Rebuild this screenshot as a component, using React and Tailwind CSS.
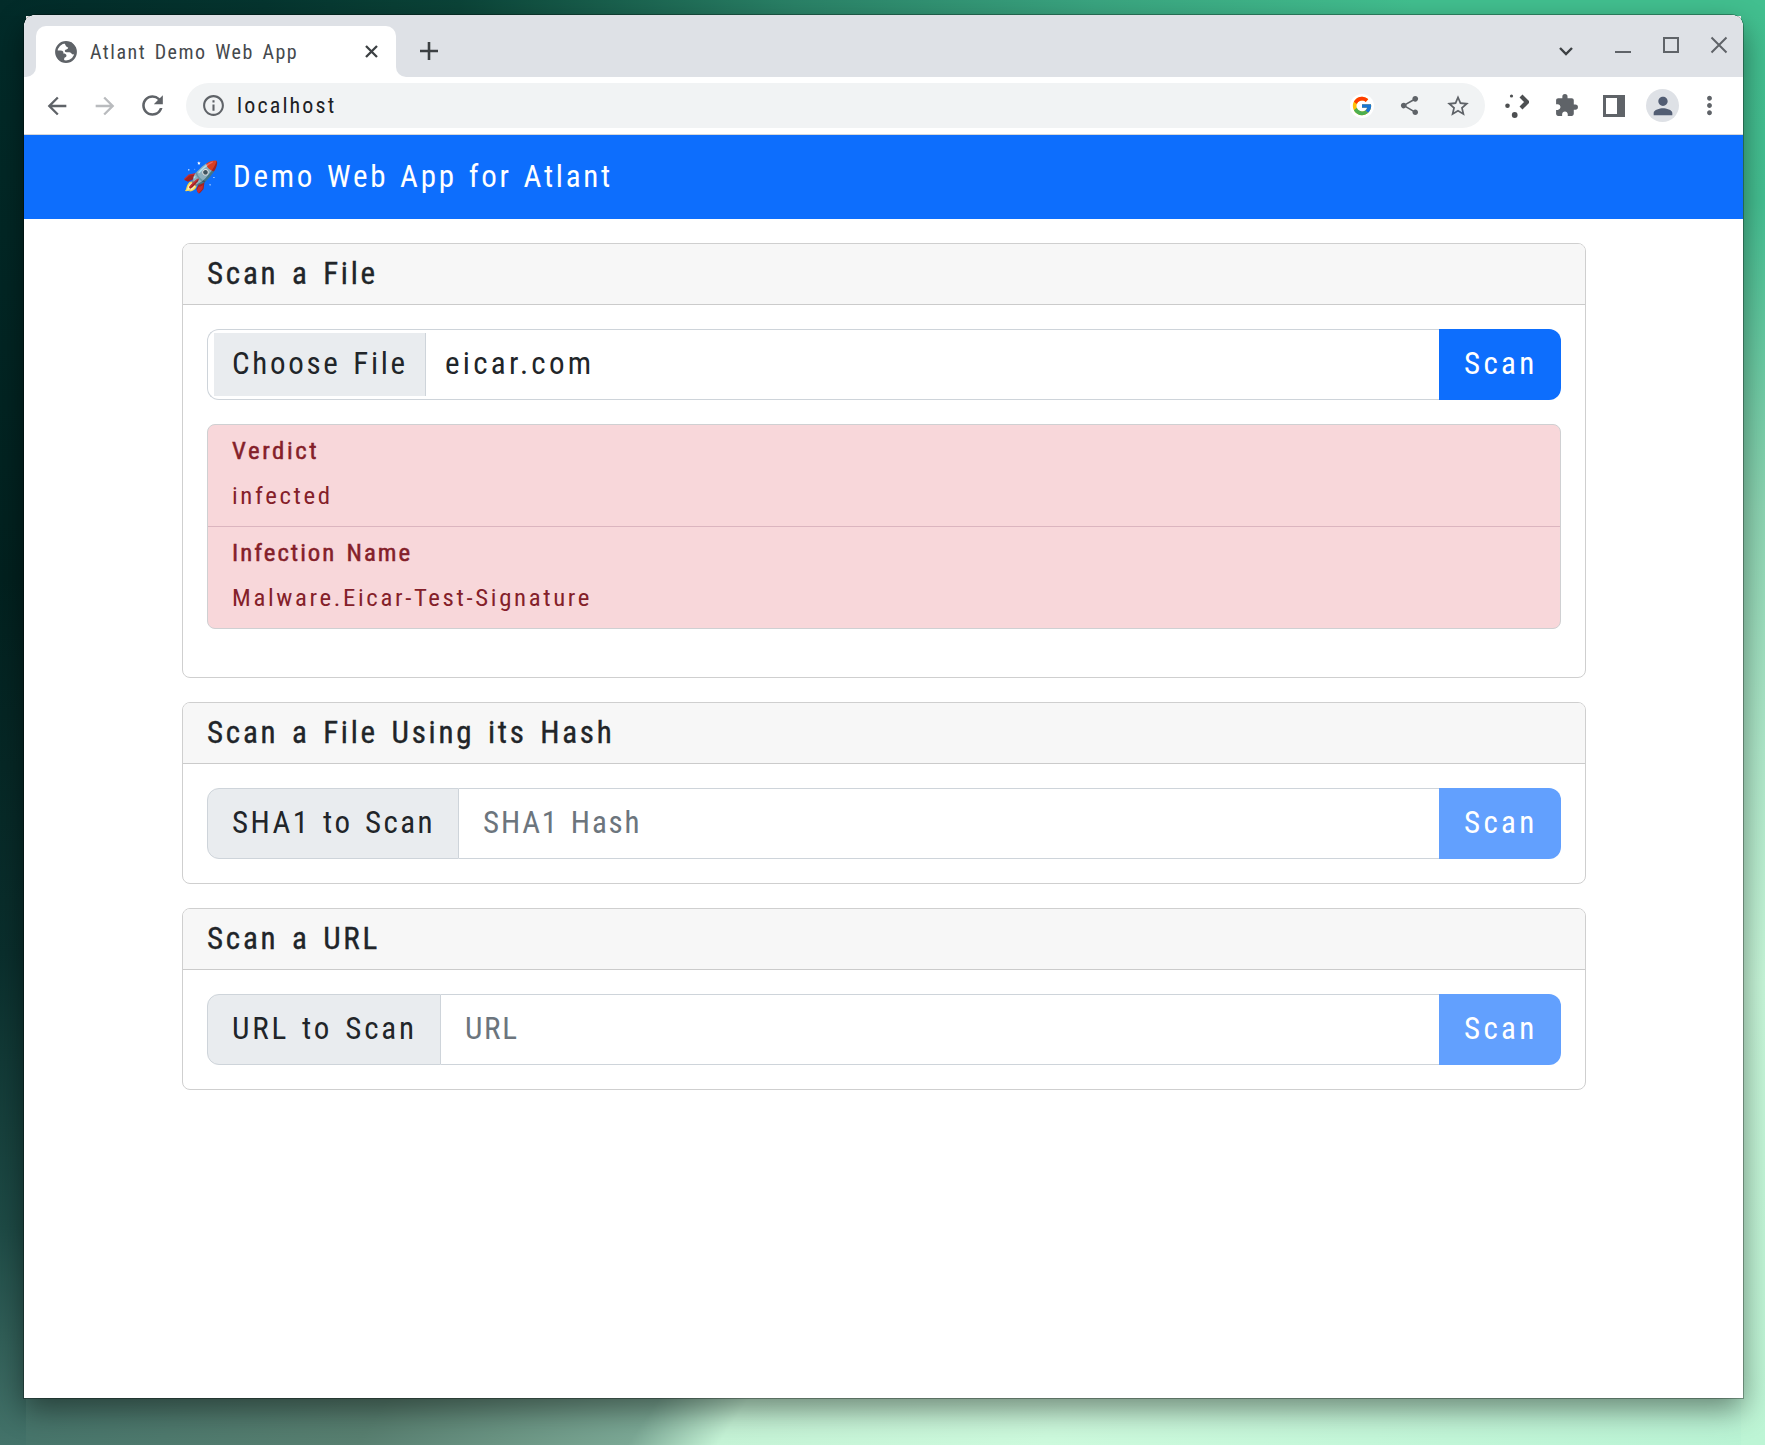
import React from "react";
import { MdArrowBack, MdArrowForward, MdRefresh, MdInfoOutline, MdShare, MdStarBorder, MdExtension, MdPerson, MdMoreVert } from "react-icons/md";
import { FcGoogle } from "react-icons/fc";

function Globe() {
  return (
    <svg viewBox="0 0 22 22" className="size-[22px] shrink-0" fill="#5f6368">
      <circle cx="11" cy="11" r="9.7" fill="none" stroke="#5f6368" strokeWidth="2.4" />
      <path d="M9.5 1H16L21 7v5l-2.6 1.4C16.5 13.400 16.6 11.500 14.500 11.200H11.500C9.600 11.200 9.300 9.600 10.500 8.800C11.700 8.200 13.200 8.300 13.200 6.500C11.700 6.600 10 4.500 9.500 1Z" />
      <path d="M1 9.500H5.500C8.200 9.500 8.800 11 8.300 12.600C9.800 12.600 11.600 13.200 11.500 14.800C11.300 16.400 9.600 16 9.200 17.500L9 21L3.500 18.500L1 13Z" />
    </svg>
  );
}

function TabBar() {
  return (
    <div className="flex h-[62px] shrink-0 bg-[#dee1e6]">
      <div className="w-3 shrink-0 bg-white">
        <div className="h-full rounded-br-[10px] bg-[#dee1e6]" />
      </div>
      <div className="flex shrink-0 flex-col justify-end bg-[#dee1e6]">
        <div className="flex h-[51px] w-[360px] items-center rounded-t-[10px] bg-white pl-[19px] pr-[18px]">
          <Globe />
          <span className="ml-[13px] flex-1 text-xl tracking-[1.500px] text-[#45494d] [word-spacing:2.5px]">Atlant Demo Web App</span>
          <svg className="size-[13px]" viewBox="0 0 13 13" stroke="#3c4043" strokeWidth="2.300"><path d="M1 1l11 11M12 1L1 12" /></svg>
        </div>
      </div>
      <div className="flex-1 bg-white">
        <div className="flex h-full rounded-bl-[10px] bg-[#dee1e6]">
          <svg className="ml-6 mt-[27px] size-[18px]" viewBox="0 0 18 18" stroke="#3c4043" strokeWidth="2.600"><path d="M9 0v18M0 9h18" /></svg>
          <div className="ml-auto flex pr-[15px]">
            <svg className="mt-[31px] h-[11px] w-4" viewBox="0 0 16 11" fill="none" stroke="#3c4043" strokeWidth="2.4"><path d="M2 2l6 6 6-6" /></svg>
            <svg className="ml-[40px] mt-[22px] h-4 w-[18px]" viewBox="0 0 18 16" stroke="#5f6368" strokeWidth="2"><path d="M1 15h16" /></svg>
            <svg className="ml-[30px] mt-[21px] size-[18px]" viewBox="0 0 18 18" fill="none" stroke="#5f6368" strokeWidth="2"><path d="M2 2h14v14H2z" /></svg>
            <svg className="ml-[30px] mt-[21px] size-[18px]" viewBox="0 0 18 18" stroke="#5f6368" strokeWidth="2"><path d="M1.500 1.500l15 15M16.500 1.500l-15 15" /></svg>
          </div>
        </div>
      </div>
    </div>
  );
}

function Toolbar() {
  return (
    <div className="flex h-[58px] shrink-0 items-center border-b border-[#d5d7da] bg-white pr-[19px] pl-[19px] text-[#5f6368]">
      <MdArrowBack className="size-[28px]" />
      <MdArrowForward className="ml-5 size-[28px] text-[#b9bbbe]" />
      <MdRefresh className="ml-[18px] size-[31px]" />
      <div className="ml-[18px] flex h-[45px] flex-1 items-center rounded-full bg-[#f1f3f4] pl-[15px] pr-[14px]">
        <MdInfoOutline className="size-[25px]" />
        <span className="ml-[11px] flex-1 text-[22px] tracking-[2.150px] text-[#202124]">localhost</span>
        <span className="flex size-6 items-center justify-center rounded-full bg-white"><FcGoogle className="size-[22px]" /></span>
        <MdShare className="ml-6 size-[23px]" />
        <MdStarBorder className="ml-6 size-[26px]" />
      </div>
      <svg className="ml-5 size-6 shrink-0" viewBox="0 0 24 24" fill="#4d4f51">
        <circle cx="6.500" cy="2" r="1.600" /><circle cx="2.500" cy="11.700" r="2.300" /><circle cx="9.700" cy="21" r="2.900" />
        <path d="M16 2l6 6-6 6" fill="none" stroke="#4d4f51" strokeWidth="4.200" />
      </svg>
      <MdExtension className="ml-[25px] size-[25px]" />
      <svg className="ml-6 size-[22px] shrink-0" viewBox="0 0 22 22"><path d="M0 0h22v22H0z" fill="#5f6368" /><path d="M3 3h11v16H3z" fill="#fff" /></svg>
      <span className="ml-[21px] flex size-[33px] items-center justify-center rounded-full bg-[#dee1e6] text-[#525d73]"><MdPerson className="size-[28px]" /></span>
      <MdMoreVert className="ml-[16px] size-[29px]" />
    </div>
  );
}

function Card({ title, className, children }) {
  return (
    <section className={`flex shrink-0 flex-col rounded-lg border border-[#cfcfcf] bg-white ${className}`}>
      <h2 className="flex h-[61px] shrink-0 items-center rounded-t-[7px] border-b border-[#cbcbcb] bg-[#f7f7f7] px-6 tracking-[2.750px] [-webkit-text-stroke:0.350px_#212529] [word-spacing:3.800px]">{title}</h2>
      <div className="p-6">{children}</div>
    </section>
  );
}

function ScanButton({ disabled }) {
  return (
    <button disabled={disabled} className="flex w-[122px] items-center rounded-r-[12px] bg-[#0d6efd] pl-[25px] tracking-[3.300px] text-white disabled:bg-[#62a0fe]">Scan</button>
  );
}

function TextScan({ label, placeholder, labelClass, inputClass }) {
  return (
    <div className="flex h-[71px]">
      <span className={`flex items-center whitespace-nowrap rounded-l-[12px] border border-[#ced4da] bg-[#e9ecef] pl-6 ${labelClass}`}>{label}</span>
      <input placeholder={placeholder} className={`min-w-0 flex-1 border-y border-[#ced4da] bg-white px-6 [word-spacing:3px] placeholder:text-[#6c757d] ${inputClass}`} />
      <ScanButton disabled />
    </div>
  );
}

function ResultRow({ name, value, className, nameClass }) {
  return (
    <div className={`px-6 pt-2 text-[24.800px]/9 tracking-[2.650px] [word-spacing:2.500px] ${className}`}>
      <dt className={`[-webkit-text-stroke:0.500px_#842029] ${nameClass}`}>{name}</dt>
      <dd className="mt-[9px]">{value}</dd>
    </div>
  );
}

export default function App() {
  return (
    <div className="h-[1445px] w-[1765px] bg-[linear-gradient(to_right,#022b29_0%,#05352f_15%,#0b4438_26%,#2a8267_45%,#3aa580_62%,#42bf8f_80%,#42bf8f_100%),linear-gradient(to_bottom,#42bf8f_0%,#45c092_14%,#8dd6b3_35%,#b0eacb_52%,#c8f8da_68%,#bdf5d5_100%),linear-gradient(to_bottom,#022b29_0%,#02211f_40%,#0a2f2d_66%,#1e4b46_85%,#44736a_100%),linear-gradient(124deg,#44736a_0%,#587f70_22%,#7ba895_37%,#c5f3d6_42%,#cdfadd_60%,#b9f3d4_100%)] bg-[size:100%_16px,24px_100%,26px_100%,100%_60px] bg-[position:top,right_top,left_top,bottom] bg-no-repeat px-6 pt-[15px] pr-[22px] pb-[47px] font-['Roboto_Condensed',Roboto,sans-serif]">
      <div className="flex h-full flex-col overflow-hidden rounded-t-[12px] bg-white shadow-[0_0_0_1px_rgba(0,0,0,0.300),0_12px_30px_rgba(0,0,0,0.450)]">
        <TabBar />
        <Toolbar />
        <header className="flex h-[84px] shrink-0 items-center bg-[#0d6efd] pl-[158px] text-[31px] tracking-[2.750px] text-white [word-spacing:2px]">
          <span className="mr-[14px] w-[37px] pb-0.5 font-['Noto_Color_Emoji'] text-[30px] tracking-normal">🚀</span>
          Demo Web App for Atlant
        </header>
        <main className="flex flex-col gap-6 pt-6 pl-[158px] pr-[157px] text-[31px] tracking-[2.700px] text-[#212529] [word-spacing:3px]">
          <Card title="Scan a File" className="h-[435px]">
            <div className="flex h-[71px]">
              <div className="flex flex-1 items-center rounded-l-[12px] border border-r-0 border-[#ced4da] pl-1.5">
                <span className="flex h-[63px] w-[212px] items-center whitespace-nowrap border-r border-[#ced4da] bg-[#e9ecef] pl-[18px]">Choose File</span>
                <span className="ml-[19px] tracking-[3.300px]">eicar.com</span>
              </div>
              <ScanButton />
            </div>
            <dl className="mt-6 h-[205px] rounded-lg border border-[#cfd0d2] bg-[#f8d7da] text-[#842029]">
              <ResultRow name="Verdict" value="infected" className="h-[102px] border-b border-[#dbb5bf]" nameClass="tracking-[2.600px]" />
              <ResultRow name="Infection Name" value="Malware.Eicar-Test-Signature" className="" nameClass="tracking-[2px]" />
            </dl>
          </Card>
          <Card title="Scan a File Using its Hash" className="h-[182px]">
            <TextScan label="SHA1 to Scan" placeholder="SHA1 Hash" labelClass="w-[252px] tracking-[2.450px]" inputClass="tracking-[1.800px]" />
          </Card>
          <Card title="Scan a URL" className="h-[182px]">
            <TextScan label="URL to Scan" placeholder="URL" labelClass="w-[234px] tracking-[2.850px]" inputClass="tracking-[1.700px]" />
          </Card>
        </main>
      </div>
    </div>
  );
}
